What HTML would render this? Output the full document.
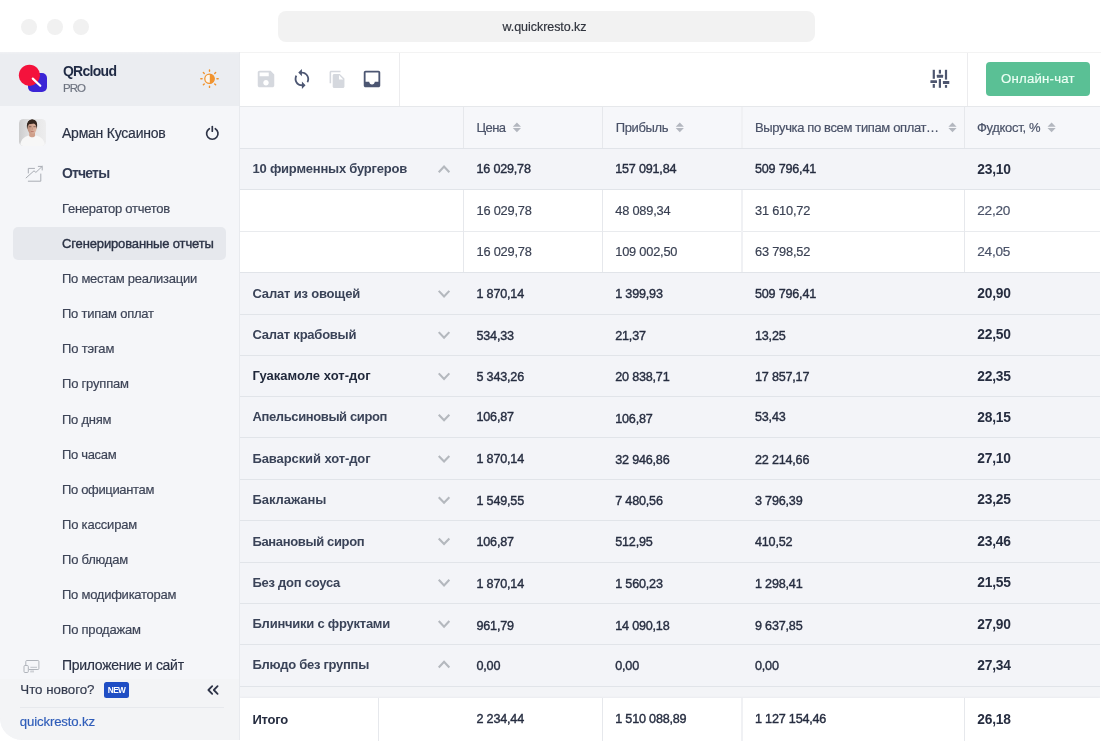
<!DOCTYPE html><html lang="ru"><head><meta charset="utf-8"><title>QRcloud PRO — Сгенерированные отчеты</title><style>
*{box-sizing:border-box}
html,body{margin:0;padding:0;background:#fff}
body{width:1101px;height:741px;overflow:hidden;position:relative;font-family:"Liberation Sans",sans-serif}
.abs,.t{position:absolute}
.t{white-space:nowrap;line-height:1;display:block}
#win{will-change:transform;position:absolute;left:0;top:0;width:1101px;height:741px;overflow:hidden}
.dot{position:absolute;top:18.8px;width:15.8px;height:15.8px;border-radius:50%;background:#f1f1f1}
#url{position:absolute;left:278px;top:11px;width:537px;height:30.5px;border-radius:8px;background:#f2f2f2}
#topline{position:absolute;left:0;top:52px;width:1101px;height:1px;background:#f3f3f3}
#side{position:absolute;left:0;top:52px;width:239px;height:688px;background:#f5f6f9;border-radius:0 0 0 22px;overflow:hidden}
#sidehead{position:absolute;left:0;top:0;width:239px;height:54px;background:linear-gradient(#f0f1f4,#ebedf1 2.5px)}
#sideedge{position:absolute;left:239px;top:52px;width:1px;height:688px;background:#e8eaee}
#sel{position:absolute;left:12.5px;top:175.3px;width:213.5px;height:32.9px;border-radius:5px;background:#e6e8ed}
#sidefoot{position:absolute;left:0;top:627px;width:239px;height:61px;background:#f3f4f6}
#footline{position:absolute;left:20px;top:655px;width:204px;height:1px;background:#e7e9ed}
#badge{position:absolute;left:104.3px;top:630.4px;width:24.5px;height:15.4px;border-radius:2.5px;background:#1f4ec4}
#main{position:absolute;left:240px;top:53px;width:860px;height:688px;background:#fff;overflow:hidden}
#tb{position:absolute;left:0;top:0;width:860px;height:54px;background:#fff;border-bottom:1px solid #e6e8eb}
.vd{position:absolute;top:0;width:1px;height:53px;background:#ececee}
#chat{position:absolute;left:746px;top:9px;width:104.3px;height:33.5px;border-radius:4px;background:#5ac095}
#thead{position:absolute;left:0;top:54px;width:860px;height:42px;background:#f6f7fa}
.hl{position:absolute;left:0;width:860px;height:1px;background:#e1e4e9}
.row{position:absolute;left:0;width:860px}
.g{background:#f3f4f8}
.w{background:#fff}
.cv{position:absolute;width:1px;background:#e6e8ec}
#tfoot{position:absolute;left:0;top:645px;width:860px;height:43px;background:#fff;box-shadow:0 -1px 2px rgba(30,40,70,.035)}
#fshadow{position:absolute;left:0;top:634px;width:860px;height:11px;background:#f3f4f7}
svg{position:absolute;overflow:visible}
</style></head><body><div id="win">
<div class="dot" style="left:21.2px"></div>
<div class="dot" style="left:46.9px"></div>
<div class="dot" style="left:72.8px"></div>
<div id="url"></div><div id="topline"></div>
<div id="side"><div id="sidehead"></div><div id="sel"></div><div id="sidefoot"></div><div id="footline"></div><div id="badge"></div></div><div id="sideedge"></div>
<div id="main"><div id="tb"><div class="vd" style="left:159px"></div><div class="vd" style="left:727px"></div><div id="chat"></div></div>
<div id="thead"></div>
<div class="row g" style="top:96px;height:40px"></div>
<div class="row w" style="top:137px;height:41px"></div>
<div class="row w" style="top:179px;height:40px"></div>
<div class="row g" style="top:220px;height:41px"></div>
<div class="row g" style="top:262px;height:40px"></div>
<div class="row g" style="top:303px;height:40px"></div>
<div class="row g" style="top:344px;height:40px"></div>
<div class="row g" style="top:385px;height:41px"></div>
<div class="row g" style="top:427px;height:40px"></div>
<div class="row g" style="top:468px;height:41px"></div>
<div class="row g" style="top:510px;height:40px"></div>
<div class="row g" style="top:551px;height:40px"></div>
<div class="row g" style="top:592px;height:41px"></div>
<div id="fshadow"></div><div id="tfoot"></div>
<div class="hl" style="top:95px"></div>
<div class="hl" style="top:136px"></div>
<div class="hl" style="top:178px;background:#e9ebee"></div>
<div class="hl" style="top:219px"></div>
<div class="hl" style="top:261px"></div>
<div class="hl" style="top:302px"></div>
<div class="hl" style="top:343px"></div>
<div class="hl" style="top:384px"></div>
<div class="hl" style="top:426px"></div>
<div class="hl" style="top:467px"></div>
<div class="hl" style="top:509px"></div>
<div class="hl" style="top:550px"></div>
<div class="hl" style="top:591px"></div>
<div class="hl" style="top:633px"></div>
<div class="cv" style="left:223px;top:54px;height:41px"></div>
<div class="cv" style="left:223px;top:137px;height:82px"></div>
<div class="cv" style="left:362px;top:54px;height:41px"></div>
<div class="cv" style="left:362px;top:137px;height:82px"></div>
<div class="cv" style="left:501px;top:54px;height:41px;width:2px;background:#f0f1f4"></div>
<div class="cv" style="left:501px;top:137px;height:82px;width:2px;background:#f0f1f4"></div>
<div class="cv" style="left:724px;top:54px;height:41px"></div>
<div class="cv" style="left:724px;top:137px;height:82px"></div>
<div class="cv" style="left:138px;top:645px;height:43px"></div>
<div class="cv" style="left:362px;top:645px;height:43px"></div>
<div class="cv" style="left:501px;top:645px;height:43px;width:2px;background:#f0f1f4"></div>
<div class="cv" style="left:724px;top:645px;height:43px"></div>
</div>
<svg style="left:0;top:0" width="1101" height="741" viewBox="0 0 1101 741">
<!-- logo -->
<rect x="28" y="73" width="19" height="19" rx="5" fill="#3b25d6"/>
<circle cx="29.45" cy="75.3" r="10.6" fill="#f4123c"/>
<path d="M32.8 78.6 L40.3 85.8" stroke="#fff" stroke-width="2.2" stroke-linecap="round"/>
<!-- sun -->
<g stroke="#f0932f" fill="none">
<circle cx="209.5" cy="78.7" r="4.7" stroke-width="1.25" fill="#fdf6ec"/>
<path d="M209.8 74 A4.7 4.7 0 0 1 209.8 83.400 Z" fill="#f0932f" stroke="none"/>
<path stroke-width="1.4" stroke-linecap="round" d="M216.90 78.70L218.20 78.70M214.73 83.93L215.65 84.85M209.50 86.10L209.50 87.40M204.27 83.93L203.35 84.85M202.10 78.70L200.80 78.70M204.27 73.47L203.35 72.55M209.50 71.30L209.50 70.00M214.73 73.47L215.65 72.55"/>
</g>
<!-- power -->
<g stroke="#2e3447" stroke-width="1.7" fill="none" stroke-linecap="round">
<path d="M209.3 128.7 A5.7 5.7 0 1 0 215.3 128.7"/>
<path d="M212.3 126.6v4.6"/>
</g>
<!-- chart icon -->
<g stroke="#a9adb4" stroke-width="1" fill="none" stroke-linecap="round" stroke-linejoin="round">
<path d="M34.5 168.4H28.3V173"/>
<path d="M28.3 181.2H40.8V174"/>
<path d="M26.1 177.9L34 170.8L35.9 172.4L42.2 166.4M38.3 166.4H42.2V170"/>
</g>
<!-- app/site icon -->
<g stroke="#b0b4bb" stroke-width="1" fill="none">
<path d="M25.8 665V661.5a1 1 0 0 1 1-1h11.1a1 1 0 0 1 1 1v7a1 1 0 0 1 -1 1H29"/>
<rect x="24" y="665.5" width="4.3" height="7" rx="1"/>
<path d="M30.4 667.3H37M30.4 669.9H34M30.2 671.8H34" stroke-width=".8"/>
</g>
<!-- collapse -->
<g stroke="#2e3447" stroke-width="1.8" fill="none" stroke-linecap="round" stroke-linejoin="round">
<path d="M212.2 686.2L208.4 690L212.2 693.8M217.6 686.2L213.8 690L217.6 693.8"/>
</g>
<!-- sort icons -->
<g fill="#b3b7bf">
<path d="M0 -4.900L4.100 -.6H-4.100ZM0 4.900L4.100 .6H-4.100Z" transform="translate(516.9 127.4)"/>
<path d="M0 -4.900L4.100 -.6H-4.100ZM0 4.900L4.100 .6H-4.100Z" transform="translate(679.8 127.4)"/>
<path d="M0 -4.900L4.100 -.6H-4.100ZM0 4.900L4.100 .6H-4.100Z" transform="translate(952.5 127.4)"/>
<path d="M0 -4.900L4.100 -.6H-4.100ZM0 4.900L4.100 .6H-4.100Z" transform="translate(1051.6 127.4)"/>
</g>
<!-- sliders -->
<g fill="#4e566f">
<rect x="932.7" y="69.8" width="2.2" height="9"/><rect x="932.7" y="84" width="2.2" height="3.8"/><rect x="930.4" y="80.2" width="6.6" height="2.7" rx=".5"/>
<rect x="938.8" y="69.8" width="2.2" height="3.8"/><rect x="938.8" y="79" width="2.2" height="8.8"/><rect x="936.8" y="74.8" width="6.3" height="2.9" rx=".5"/>
<rect x="944.9" y="69.8" width="2.2" height="9.8"/><rect x="944.9" y="85" width="2.2" height="2.8"/><rect x="942.9" y="81.1" width="6.4" height="2.8" rx=".5"/>
</g>
</svg>
<!-- toolbar material icons -->
<svg style="left:255.2px;top:67.6px" width="22" height="22" viewBox="0 0 24 24"><path fill="#d5d8de" d="M17 3H5c-1.11 0-2 .9-2 2v14c0 1.1.89 2 2 2h14c1.1 0 2-.9 2-2V7l-4-4zm-5 16c-1.66 0-3-1.34-3-3s1.34-3 3-3 3 1.34 3 3-1.34 3-3 3zm3-10H5V5h10v4z"/></svg>
<svg style="left:291.1px;top:68.1px" width="21.8" height="21.8" viewBox="0 0 24 24"><path fill="#4c5672" d="M12 4V1L8 5l4 4V6c3.31 0 6 2.69 6 6 0 1.01-.25 1.97-.7 2.8l1.46 1.46C19.54 15.03 20 13.57 20 12c0-4.42-3.58-8-8-8zm0 14c-3.31 0-6-2.69-6-6 0-1.01.25-1.97.7-2.8L5.24 7.74C4.46 8.97 4 10.43 4 12c0 4.42 3.58 8 8 8v3l4-4-4-4v3z"/></svg>
<svg style="left:328px;top:69.8px" width="18.8" height="18.8" viewBox="0 0 24 24"><path fill="#d5d8de" d="M16 1H4c-1.1 0-2 .9-2 2v14h2V3h12V1zm-1 4l6 6v10c0 1.100-.9 2-2 2H7.990C6.890 23 6 22.100 6 21l.010-14c0-1.100.89-2 1.990-2h7zm-1 7h5.500L14 6.500V12z"/></svg>
<svg style="left:360.9px;top:68px" width="22" height="22" viewBox="0 0 24 24"><path fill="#4c5672" d="M19 3H4.990c-1.110 0-1.980.89-1.980 2L3 19c0 1.100.88 2 1.990 2H19c1.100 0 2-.9 2-2V5c0-1.110-.9-2-2-2zm0 12h-4c0 1.660-1.350 3-3 3s-3-1.340-3-3H4.990V5H19v10z"/></svg>
<!-- avatar -->
<svg style="left:19px;top:118.7px" width="27" height="27" viewBox="0 0 27 27">
<defs><linearGradient id="avbg" x1="0" x2="1" y1="0" y2="0"><stop offset="0" stop-color="#cdcdce"/><stop offset=".45" stop-color="#e4e4e5"/><stop offset="1" stop-color="#ededee"/></linearGradient>
<linearGradient id="avsk" x1="0" x2="1" y1="0" y2="0"><stop offset="0" stop-color="#b98c79"/><stop offset=".6" stop-color="#d7ab97"/><stop offset="1" stop-color="#dcb3a0"/></linearGradient>
<clipPath id="avc"><rect width="27" height="27" rx="4.5"/></clipPath></defs>
<g clip-path="url(#avc)"><rect width="27" height="27" fill="url(#avbg)"/>
<path d="M1.200 27C1.600 21 4.500 18.300 9.300 16.600L13 18.200L17.600 16.600C22.500 18.200 25.500 21 26 27Z" fill="#f7f7f7"/>
<path d="M10.200 12.500h5.800v4.400c-1 1.700-4.600 1.700-5.800 0Z" fill="#cf9f8a"/>
<ellipse cx="13.100" cy="6.600" rx="4.900" ry="6" fill="#35261f"/><ellipse cx="13.050" cy="9.300" rx="4.600" ry="5.500" fill="url(#avsk)"/>
<path d="M8.300 10.500C6.900 4.300 9.500.6 13.200.6c3.800 0 5.800 3 4.700 8.700c-.3-2.700-1.200-4.300-2.300-5c-1.800.8-4.300 1-6.200.6c-.8 1.300-1.100 3-1.100 5.600Z" fill="#35261f"/>
<path d="M9.900 7.700h2.500M14.400 7.700h2.400" stroke="#5a3d33" stroke-width=".7" opacity=".85"/>
<path d="M11.900 12.500h2.800" stroke="#b26a5e" stroke-width=".7"/>
<path d="M13.400 8.500v2.300" stroke="#b98c79" stroke-width=".6"/>
</g></svg>

<svg style="left:0;top:0" width="1101" height="741"><path d="M438.75 172.25L444.05 166.65L449.35 172.25M438.75 290.86L444.05 296.46L449.35 290.86M438.75 332.13L444.05 337.73L449.35 332.13M438.75 373.40L444.05 379.00L449.35 373.40M438.75 414.67L444.05 420.27L449.35 414.67M438.75 455.94L444.05 461.54L449.35 455.94M438.75 497.21L444.05 502.81L449.35 497.21M438.75 538.48L444.05 544.08L449.35 538.48M438.75 579.75L444.05 585.35L449.35 579.75M438.75 621.02L444.05 626.62L449.35 621.02M438.75 667.49L444.05 661.89L449.35 667.49" fill="none" stroke="#b4b8be" stroke-width="2.1" stroke-linecap="butt" stroke-linejoin="miter"/></svg>
<div class="addr">
<span class="t" style="left:502.50px;top:21.00px;font-size:12.5px;font-weight:400;color:#30343d;letter-spacing:-0.051px;-webkit-text-stroke:.18px #30343d;">w.quickresto.kz</span>
</div>
<nav class="sidebar-text">
<span class="t" style="left:62.90px;top:64.00px;font-size:14px;font-weight:700;color:#1f2a44;letter-spacing:-0.706px;">QRcloud</span>
<span class="t" style="left:62.90px;top:83.00px;font-size:11.5px;font-weight:400;color:#6e7480;letter-spacing:-0.874px;-webkit-text-stroke:.18px #6e7480;">PRO</span>
<span class="t" style="left:62.00px;top:126.00px;font-size:14px;font-weight:400;color:#2b3245;letter-spacing:-0.230px;-webkit-text-stroke:.18px #2b3245;">Арман Кусаинов</span>
<span class="t" style="left:62.00px;top:166.00px;font-size:14px;font-weight:700;color:#333c54;letter-spacing:-0.841px;">Отчеты</span>
<span class="t" style="left:62.00px;top:202.00px;font-size:13px;font-weight:400;color:#3d4457;letter-spacing:-0.252px;-webkit-text-stroke:.18px #3d4457;">Генератор отчетов</span>
<span class="t" style="left:62.00px;top:237.00px;font-size:13px;font-weight:400;color:#2b3245;letter-spacing:-0.136px;-webkit-text-stroke:.38px #2b3245;">Сгенерированные отчеты</span>
<span class="t" style="left:62.00px;top:272.00px;font-size:13px;font-weight:400;color:#3d4457;letter-spacing:-0.257px;-webkit-text-stroke:.18px #3d4457;">По местам реализации</span>
<span class="t" style="left:62.00px;top:307.00px;font-size:13px;font-weight:400;color:#3d4457;letter-spacing:-0.231px;-webkit-text-stroke:.18px #3d4457;">По типам оплат</span>
<span class="t" style="left:62.00px;top:342.00px;font-size:13px;font-weight:400;color:#3d4457;letter-spacing:-0.145px;-webkit-text-stroke:.18px #3d4457;">По тэгам</span>
<span class="t" style="left:62.00px;top:377.00px;font-size:13px;font-weight:400;color:#3d4457;letter-spacing:-0.202px;-webkit-text-stroke:.18px #3d4457;">По группам</span>
<span class="t" style="left:62.00px;top:413.00px;font-size:13px;font-weight:400;color:#3d4457;letter-spacing:-0.241px;-webkit-text-stroke:.18px #3d4457;">По дням</span>
<span class="t" style="left:62.00px;top:448.00px;font-size:13px;font-weight:400;color:#3d4457;letter-spacing:-0.326px;-webkit-text-stroke:.18px #3d4457;">По часам</span>
<span class="t" style="left:62.00px;top:483.00px;font-size:13px;font-weight:400;color:#3d4457;letter-spacing:-0.344px;-webkit-text-stroke:.18px #3d4457;">По официантам</span>
<span class="t" style="left:62.00px;top:518.00px;font-size:13px;font-weight:400;color:#3d4457;letter-spacing:-0.188px;-webkit-text-stroke:.18px #3d4457;">По кассирам</span>
<span class="t" style="left:62.00px;top:553.00px;font-size:13px;font-weight:400;color:#3d4457;letter-spacing:-0.207px;-webkit-text-stroke:.18px #3d4457;">По блюдам</span>
<span class="t" style="left:62.00px;top:588.00px;font-size:13px;font-weight:400;color:#3d4457;letter-spacing:-0.249px;-webkit-text-stroke:.18px #3d4457;">По модификаторам</span>
<span class="t" style="left:62.00px;top:623.00px;font-size:13px;font-weight:400;color:#3d4457;letter-spacing:-0.213px;-webkit-text-stroke:.18px #3d4457;">По продажам</span>
<span class="t" style="left:62.00px;top:658.00px;font-size:14px;font-weight:400;color:#2b3245;letter-spacing:-0.293px;-webkit-text-stroke:.18px #2b3245;">Приложение и сайт</span>
<span class="t" style="left:20.35px;top:683.00px;font-size:13.3px;font-weight:400;color:#343b4e;letter-spacing:-0.013px;-webkit-text-stroke:.18px #343b4e;">Что нового?</span>
<span class="t" style="left:107.80px;top:686.00px;font-size:8.3px;font-weight:700;color:#ffffff;letter-spacing:-0.620px;">NEW</span>
<span class="t" style="left:19.80px;top:715.00px;font-size:13.2px;font-weight:400;color:#2f5db9;letter-spacing:-0.136px;-webkit-text-stroke:.18px #2f5db9;">quickresto.kz</span>
</nav>
<div class="toolbar-text">
<span class="t" style="left:1001.00px;top:72.00px;font-size:13.2px;font-weight:400;color:#ecfff4;letter-spacing:0.217px;-webkit-text-stroke:.18px #ecfff4;">Онлайн-чат</span>
</div>
<div class="thead-text">
<span class="t" style="left:476.50px;top:121.00px;font-size:13px;font-weight:400;color:#4a5268;letter-spacing:-0.566px;-webkit-text-stroke:.18px #4a5268;">Цена</span>
<span class="t" style="left:615.75px;top:121.00px;font-size:13px;font-weight:400;color:#4a5268;letter-spacing:-0.355px;-webkit-text-stroke:.18px #4a5268;">Прибыль</span>
<span class="t" style="left:755.00px;top:121.00px;font-size:13px;font-weight:400;color:#4a5268;letter-spacing:-0.363px;-webkit-text-stroke:.18px #4a5268;">Выручка по всем типам оплат…</span>
<span class="t" style="left:977.00px;top:121.00px;font-size:13px;font-weight:400;color:#4a5268;letter-spacing:-0.316px;-webkit-text-stroke:.18px #4a5268;">Фудкост, %</span>
</div>
<div class="tbody-text">
<span class="t" style="left:252.50px;top:162.00px;font-size:13px;font-weight:700;color:#3a4358;letter-spacing:-0.219px;">10 фирменных бургеров</span>
<span class="t" style="left:476.50px;top:163.00px;font-size:12.6px;font-weight:400;color:#262d40;letter-spacing:-0.200px;-webkit-text-stroke:.38px #262d40;">16 029,78</span>
<span class="t" style="left:615.25px;top:163.00px;font-size:12.6px;font-weight:400;color:#262d40;letter-spacing:-0.202px;-webkit-text-stroke:.38px #262d40;">157 091,84</span>
<span class="t" style="left:755.00px;top:163.00px;font-size:12.6px;font-weight:400;color:#262d40;letter-spacing:-0.202px;-webkit-text-stroke:.38px #262d40;">509 796,41</span>
<span class="t" style="left:977.25px;top:163.00px;font-size:13.8px;font-weight:700;color:#262d40;letter-spacing:-0.222px;">23,10</span>
<span class="t" style="left:476.50px;top:205.00px;font-size:12.8px;font-weight:400;color:#3a4153;letter-spacing:-0.203px;-webkit-text-stroke:.18px #3a4153;">16 029,78</span>
<span class="t" style="left:615.25px;top:205.00px;font-size:12.8px;font-weight:400;color:#3a4153;letter-spacing:-0.203px;-webkit-text-stroke:.18px #3a4153;">48 089,34</span>
<span class="t" style="left:755.00px;top:205.00px;font-size:12.8px;font-weight:400;color:#3a4153;letter-spacing:-0.203px;-webkit-text-stroke:.18px #3a4153;">31 610,72</span>
<span class="t" style="left:977.25px;top:204.00px;font-size:13.6px;font-weight:400;color:#4a5268;letter-spacing:-0.219px;-webkit-text-stroke:.18px #4a5268;">22,20</span>
<span class="t" style="left:476.50px;top:246.00px;font-size:12.8px;font-weight:400;color:#3a4153;letter-spacing:-0.203px;-webkit-text-stroke:.18px #3a4153;">16 029,78</span>
<span class="t" style="left:615.25px;top:246.00px;font-size:12.8px;font-weight:400;color:#3a4153;letter-spacing:-0.206px;-webkit-text-stroke:.18px #3a4153;">109 002,50</span>
<span class="t" style="left:755.00px;top:246.00px;font-size:12.8px;font-weight:400;color:#3a4153;letter-spacing:-0.203px;-webkit-text-stroke:.18px #3a4153;">63 798,52</span>
<span class="t" style="left:977.25px;top:245.00px;font-size:13.6px;font-weight:400;color:#4a5268;letter-spacing:-0.219px;-webkit-text-stroke:.18px #4a5268;">24,05</span>
<span class="t" style="left:252.50px;top:287.00px;font-size:13px;font-weight:700;color:#3a4358;letter-spacing:-0.180px;">Салат из овощей</span>
<span class="t" style="left:476.50px;top:288.00px;font-size:12.6px;font-weight:400;color:#262d40;letter-spacing:-0.197px;-webkit-text-stroke:.38px #262d40;">1 870,14</span>
<span class="t" style="left:615.25px;top:288.00px;font-size:12.6px;font-weight:400;color:#262d40;letter-spacing:-0.197px;-webkit-text-stroke:.38px #262d40;">1 399,93</span>
<span class="t" style="left:755.00px;top:288.00px;font-size:12.6px;font-weight:400;color:#262d40;letter-spacing:-0.202px;-webkit-text-stroke:.38px #262d40;">509 796,41</span>
<span class="t" style="left:977.25px;top:287.00px;font-size:13.8px;font-weight:700;color:#262d40;letter-spacing:-0.222px;">20,90</span>
<span class="t" style="left:252.50px;top:328.00px;font-size:13px;font-weight:700;color:#3a4358;letter-spacing:-0.231px;">Салат крабовый</span>
<span class="t" style="left:476.50px;top:330.00px;font-size:12.6px;font-weight:400;color:#262d40;letter-spacing:-0.206px;-webkit-text-stroke:.38px #262d40;">534,33</span>
<span class="t" style="left:615.25px;top:330.00px;font-size:12.6px;font-weight:400;color:#262d40;letter-spacing:-0.202px;-webkit-text-stroke:.38px #262d40;">21,37</span>
<span class="t" style="left:755.00px;top:330.00px;font-size:12.6px;font-weight:400;color:#262d40;letter-spacing:-0.202px;-webkit-text-stroke:.38px #262d40;">13,25</span>
<span class="t" style="left:977.25px;top:328.00px;font-size:13.8px;font-weight:700;color:#262d40;letter-spacing:-0.222px;">22,50</span>
<span class="t" style="left:252.50px;top:369.00px;font-size:13px;font-weight:700;color:#1f273a;letter-spacing:0.031px;">Гуакамоле хот-дог</span>
<span class="t" style="left:476.50px;top:371.00px;font-size:12.6px;font-weight:400;color:#262d40;letter-spacing:-0.197px;-webkit-text-stroke:.38px #262d40;">5 343,26</span>
<span class="t" style="left:615.25px;top:371.00px;font-size:12.6px;font-weight:400;color:#262d40;letter-spacing:-0.200px;-webkit-text-stroke:.38px #262d40;">20 838,71</span>
<span class="t" style="left:755.00px;top:371.00px;font-size:12.6px;font-weight:400;color:#262d40;letter-spacing:-0.200px;-webkit-text-stroke:.38px #262d40;">17 857,17</span>
<span class="t" style="left:977.25px;top:370.00px;font-size:13.8px;font-weight:700;color:#262d40;letter-spacing:-0.222px;">22,35</span>
<span class="t" style="left:252.50px;top:410.00px;font-size:13px;font-weight:700;color:#3a4358;letter-spacing:-0.383px;">Апельсиновый сироп</span>
<span class="t" style="left:476.50px;top:411.00px;font-size:12.6px;font-weight:400;color:#262d40;letter-spacing:-0.206px;-webkit-text-stroke:.38px #262d40;">106,87</span>
<span class="t" style="left:615.25px;top:413.00px;font-size:12.6px;font-weight:400;color:#262d40;letter-spacing:-0.206px;-webkit-text-stroke:.38px #262d40;">106,87</span>
<span class="t" style="left:755.00px;top:411.00px;font-size:12.6px;font-weight:400;color:#262d40;letter-spacing:-0.202px;-webkit-text-stroke:.38px #262d40;">53,43</span>
<span class="t" style="left:977.25px;top:411.00px;font-size:13.8px;font-weight:700;color:#262d40;letter-spacing:-0.222px;">28,15</span>
<span class="t" style="left:252.50px;top:452.00px;font-size:13px;font-weight:700;color:#3a4358;letter-spacing:-0.102px;">Баварский хот-дог</span>
<span class="t" style="left:476.50px;top:453.00px;font-size:12.6px;font-weight:400;color:#262d40;letter-spacing:-0.197px;-webkit-text-stroke:.38px #262d40;">1 870,14</span>
<span class="t" style="left:615.25px;top:454.00px;font-size:12.6px;font-weight:400;color:#262d40;letter-spacing:-0.200px;-webkit-text-stroke:.38px #262d40;">32 946,86</span>
<span class="t" style="left:755.00px;top:454.00px;font-size:12.6px;font-weight:400;color:#262d40;letter-spacing:-0.200px;-webkit-text-stroke:.38px #262d40;">22 214,66</span>
<span class="t" style="left:977.25px;top:452.00px;font-size:13.8px;font-weight:700;color:#262d40;letter-spacing:-0.222px;">27,10</span>
<span class="t" style="left:252.50px;top:493.00px;font-size:13px;font-weight:700;color:#3a4358;letter-spacing:-0.061px;">Баклажаны</span>
<span class="t" style="left:476.50px;top:495.00px;font-size:12.6px;font-weight:400;color:#262d40;letter-spacing:-0.197px;-webkit-text-stroke:.38px #262d40;">1 549,55</span>
<span class="t" style="left:615.25px;top:495.00px;font-size:12.6px;font-weight:400;color:#262d40;letter-spacing:-0.197px;-webkit-text-stroke:.38px #262d40;">7 480,56</span>
<span class="t" style="left:755.00px;top:495.00px;font-size:12.6px;font-weight:400;color:#262d40;letter-spacing:-0.197px;-webkit-text-stroke:.38px #262d40;">3 796,39</span>
<span class="t" style="left:977.25px;top:493.00px;font-size:13.8px;font-weight:700;color:#262d40;letter-spacing:-0.222px;">23,25</span>
<span class="t" style="left:252.50px;top:535.00px;font-size:13px;font-weight:700;color:#3a4358;letter-spacing:-0.357px;">Банановый сироп</span>
<span class="t" style="left:476.50px;top:536.00px;font-size:12.6px;font-weight:400;color:#262d40;letter-spacing:-0.206px;-webkit-text-stroke:.38px #262d40;">106,87</span>
<span class="t" style="left:615.25px;top:536.00px;font-size:12.6px;font-weight:400;color:#262d40;letter-spacing:-0.206px;-webkit-text-stroke:.38px #262d40;">512,95</span>
<span class="t" style="left:755.00px;top:536.00px;font-size:12.6px;font-weight:400;color:#262d40;letter-spacing:-0.206px;-webkit-text-stroke:.38px #262d40;">410,52</span>
<span class="t" style="left:977.25px;top:535.00px;font-size:13.8px;font-weight:700;color:#262d40;letter-spacing:-0.222px;">23,46</span>
<span class="t" style="left:252.50px;top:576.00px;font-size:13px;font-weight:700;color:#3a4358;letter-spacing:-0.257px;">Без доп соуса</span>
<span class="t" style="left:476.50px;top:578.00px;font-size:12.6px;font-weight:400;color:#262d40;letter-spacing:-0.197px;-webkit-text-stroke:.38px #262d40;">1 870,14</span>
<span class="t" style="left:615.25px;top:578.00px;font-size:12.6px;font-weight:400;color:#262d40;letter-spacing:-0.197px;-webkit-text-stroke:.38px #262d40;">1 560,23</span>
<span class="t" style="left:755.00px;top:578.00px;font-size:12.6px;font-weight:400;color:#262d40;letter-spacing:-0.197px;-webkit-text-stroke:.38px #262d40;">1 298,41</span>
<span class="t" style="left:977.25px;top:576.00px;font-size:13.8px;font-weight:700;color:#262d40;letter-spacing:-0.222px;">21,55</span>
<span class="t" style="left:252.50px;top:617.00px;font-size:13px;font-weight:700;color:#3a4358;letter-spacing:-0.238px;">Блинчики с фруктами</span>
<span class="t" style="left:476.50px;top:620.00px;font-size:12.6px;font-weight:400;color:#262d40;letter-spacing:-0.206px;-webkit-text-stroke:.38px #262d40;">961,79</span>
<span class="t" style="left:615.25px;top:620.00px;font-size:12.6px;font-weight:400;color:#262d40;letter-spacing:-0.200px;-webkit-text-stroke:.38px #262d40;">14 090,18</span>
<span class="t" style="left:755.00px;top:620.00px;font-size:12.6px;font-weight:400;color:#262d40;letter-spacing:-0.197px;-webkit-text-stroke:.38px #262d40;">9 637,85</span>
<span class="t" style="left:977.25px;top:618.00px;font-size:13.8px;font-weight:700;color:#262d40;letter-spacing:-0.222px;">27,90</span>
<span class="t" style="left:252.50px;top:658.00px;font-size:13px;font-weight:700;color:#3a4358;letter-spacing:-0.275px;">Блюдо без группы</span>
<span class="t" style="left:476.50px;top:660.00px;font-size:12.6px;font-weight:400;color:#262d40;letter-spacing:-0.197px;-webkit-text-stroke:.38px #262d40;">0,00</span>
<span class="t" style="left:615.25px;top:660.00px;font-size:12.6px;font-weight:400;color:#262d40;letter-spacing:-0.197px;-webkit-text-stroke:.38px #262d40;">0,00</span>
<span class="t" style="left:755.00px;top:660.00px;font-size:12.6px;font-weight:400;color:#262d40;letter-spacing:-0.197px;-webkit-text-stroke:.38px #262d40;">0,00</span>
<span class="t" style="left:977.25px;top:659.00px;font-size:13.8px;font-weight:700;color:#262d40;letter-spacing:-0.222px;">27,34</span>
</div>
<div class="tfoot-text">
<span class="t" style="left:252.50px;top:713.00px;font-size:13px;font-weight:700;color:#262d40;letter-spacing:-0.234px;">Итого</span>
<span class="t" style="left:476.50px;top:713.00px;font-size:12.6px;font-weight:400;color:#262d40;letter-spacing:-0.197px;-webkit-text-stroke:.38px #262d40;">2 234,44</span>
<span class="t" style="left:615.25px;top:713.00px;font-size:12.6px;font-weight:400;color:#262d40;letter-spacing:-0.197px;-webkit-text-stroke:.38px #262d40;">1 510 088,89</span>
<span class="t" style="left:755.00px;top:713.00px;font-size:12.6px;font-weight:400;color:#262d40;letter-spacing:-0.197px;-webkit-text-stroke:.38px #262d40;">1 127 154,46</span>
<span class="t" style="left:977.25px;top:713.00px;font-size:13.8px;font-weight:700;color:#262d40;letter-spacing:-0.222px;">26,18</span>
</div>
</div></body></html>
